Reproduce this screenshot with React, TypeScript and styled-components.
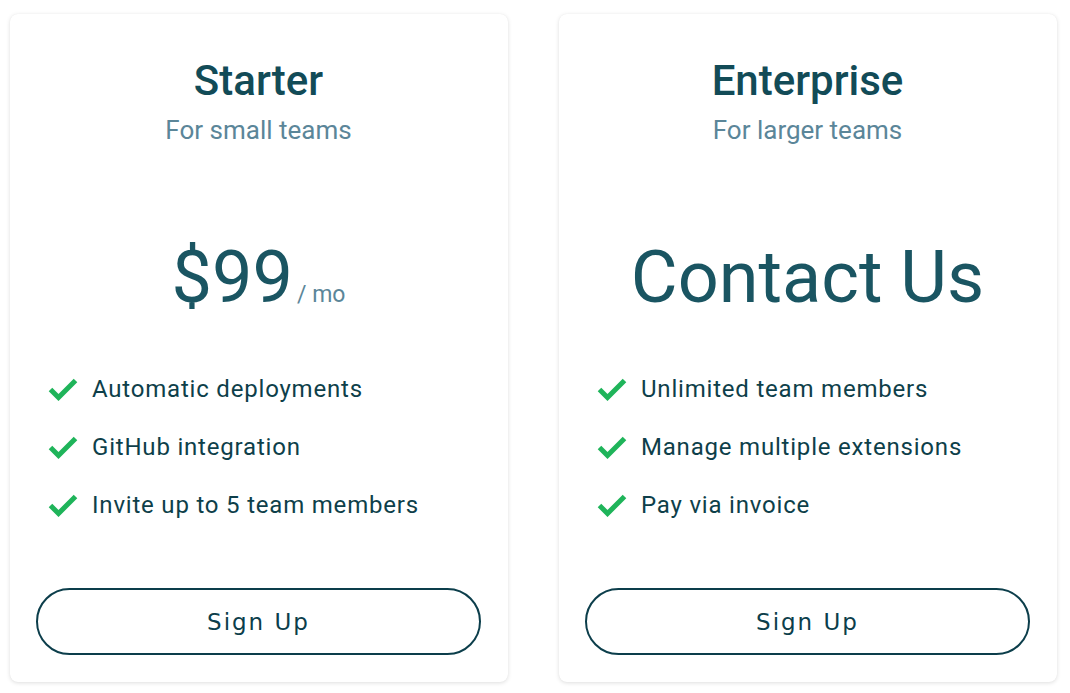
import React from "react";
import styled, { createGlobalStyle } from "styled-components";

const GlobalStyle = createGlobalStyle`
  html, body {
    margin: 0;
    padding: 0;
    background: #fff;
  }
  body {
    font-family: Roboto, "Liberation Sans", sans-serif;
  }
`;

const Page = styled.div`
  display: grid;
  grid-template-columns: 498px 498px;
  column-gap: 51px;
  padding: 14px 13px 11px 10px;
  height: 693px;
  box-sizing: border-box;
`;

const Card = styled.div`
  display: flex;
  flex-direction: column;
  background: #fff;
  border-radius: 8px;
  box-shadow: 0 1px 4px rgba(0, 0, 0, 0.13), 0 0 1px rgba(0, 0, 0, 0.06);
  padding: 42px 27px 27px 26px;
  box-sizing: border-box;
`;

const Title = styled.h2`
  margin: 0;
  text-align: center;
  font-size: 42px;
  line-height: 50px;
  font-weight: 500;
  color: #124b57;
`;

const Subtitle = styled.div`
  margin-top: 8px;
  text-align: center;
  font-size: 26px;
  line-height: 32px;
  color: #5b8699;
`;

const Price = styled.div`
  margin-top: 90px;
  height: 84px;
  text-align: center;
  font-size: 72px;
  line-height: 84px;
  color: #1a5562;
  white-space: nowrap;
`;

const Period = styled.span`
  margin-left: 4px;
  font-size: 23px;
  line-height: 0;
  color: #5b8699;
`;

const Features = styled.ul`
  list-style: none;
  margin: 54px 0 0;
  padding: 0 0 0 12px;
  display: flex;
  flex-direction: column;
  gap: 28px;
`;

const Feature = styled.li`
  display: flex;
  align-items: center;
  gap: 14px;
  font-size: 24px;
  line-height: 30px;
  color: #0e3f4a;
  letter-spacing: 0.8px;
`;

const Button = styled.button`
  margin-top: auto;
  height: 67px;
  width: 100%;
  border: 2px solid #0c3e4b;
  border-radius: 34px;
  background: #fff;
  color: #0c3e4b;
  font-family: "DejaVu Sans", Verdana, sans-serif;
  font-size: 23px;
  letter-spacing: 2px;
  cursor: pointer;
`;

const Check = () => (
  <svg width="30" height="24" viewBox="0 0 30 24">
    <polyline
      points="2.5,12.5 10.5,20.5 27.5,3.5"
      fill="none"
      stroke="#1fb45a"
      strokeWidth="5"
      strokeLinejoin="miter"
    />
  </svg>
);

type Plan = {
  name: string;
  tagline: string;
  price: string;
  period?: string;
  features: string[];
};

const plans: Plan[] = [
  {
    name: "Starter",
    tagline: "For small teams",
    price: "$99",
    period: "/ mo",
    features: ["Automatic deployments", "GitHub integration", "Invite up to 5 team members"],
  },
  {
    name: "Enterprise",
    tagline: "For larger teams",
    price: "Contact Us",
    features: ["Unlimited team members", "Manage multiple extensions", "Pay via invoice"],
  },
];

const App = () => {
  return (
    <>
      <GlobalStyle />
      <Page>
        {plans.map((plan) => (
          <Card key={plan.name}>
            <Title>{plan.name}</Title>
            <Subtitle>{plan.tagline}</Subtitle>
            <Price>
              {plan.price}
              {plan.period && <Period>{plan.period}</Period>}
            </Price>
            <Features>
              {plan.features.map((f) => (
                <Feature key={f}>
                  <Check />
                  {f}
                </Feature>
              ))}
            </Features>
            <Button>Sign Up</Button>
          </Card>
        ))}
      </Page>
    </>
  );
};

export default App;
